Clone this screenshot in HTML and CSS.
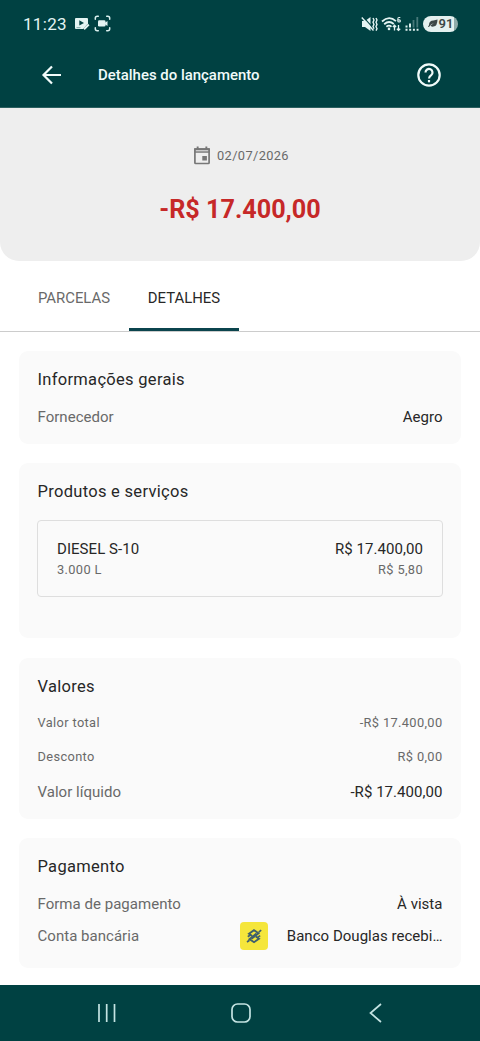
FILE: index.html
```html
<!DOCTYPE html>
<html lang="pt-BR">
<head>
<meta charset="utf-8">
<title>Detalhes do lançamento</title>
<link rel="stylesheet" href="styles.css">
</head>
<body>
<div class="screen">
  <div class="status">
    <span class="clock">11:23</span>
    <svg class="media" width="16" height="14" viewBox="0 0 16 14"><path d="M2 1h11q1 0 1 1v4.500L9 12H2q-1 0-1-1V2q0-1 1-1z" fill="#e4f4f3"/><path d="M5.300 3.200v5.400L10 5.900z" fill="#004142"/><path d="M2.500 10.700h4" stroke="#7ba5a5" stroke-width="1"/><path d="M10 12.300l4.800-4.800" stroke="#e4f4f3" stroke-width="2"/></svg>
    <svg width="17" height="17" viewBox="0 0 17 17" fill="none" stroke="#d9efee" stroke-width="1.500" stroke-linecap="round"><path d="M1.300 4.200V3.300q0-2 2-2h1M12.700 1.300h1q2 0 2 2v.9M15.700 12.800v.9q0 2-2 2h-1M4.300 15.700h-1q-2 0-2-2v-.9"/><rect x="4" y="5.200" width="7.500" height="6.400" rx="1.300" fill="#e4f4f3" stroke="none"/><path d="M10.500 8l3-2v5l-3-2z" fill="#e4f4f3" stroke="none"/></svg>
    <div class="signals">
      <svg width="17" height="16" viewBox="0 0 17 16"><path d="M1 5h3l5.500-4v14L4 11H1z" fill="#e4f4f3"/><path d="M1.800.7l11 12" stroke="#004142" stroke-width="1.200"/><path d="M.8 1.500l11.700 13" stroke="#e4f4f3" stroke-width="1.400"/><path d="M12 2l1 2-1 2.200 1 2.200-1 2.100 1 2.300M15 2l1 2-1 2.200 1 2.200-1 2.100 1 2.300-1 1.800" fill="none" stroke="#e4f4f3" stroke-width="1.400"/></svg>
      <svg class="wifi" width="21" height="16" viewBox="0 0 21 16" fill="none" stroke="#e4f4f3" stroke-width="1.800"><path d="M1 5.500Q8 -1 15 5.200M3.200 8.200Q8 4 12.800 8M5.400 10.700Q8 8.500 10.500 10.700"/><circle cx="8" cy="12.900" r="1.300" fill="#e4f4f3" stroke="none"/><path d="M13.500 14.500V9.500M11.800 11l1.700-1.700 1.600 1.700M17.500 9v5.300M15.900 12.700l1.600 1.700 1.700-1.700" stroke-width="1.300"/><path d="M19.300 1.500h-1.300q-1.200 0-1.200 1.500v2q0 1 1.300 1t1.300-1-1.300-1.100h-1.200" stroke-width="1.100"/></svg>
      <svg width="14" height="16" viewBox="0 0 14 16"><path d="M1.500 9.500v2M5 7.500v4" stroke="#d9efee" stroke-width="2"/><path d="M8.500 4v7.500M12.300 1v10.500" stroke="#47797a" stroke-width="1.800"/><path d="M.5 13.700h13" stroke="#e4f4f3" stroke-width="2" stroke-dasharray="2 1.700"/></svg>
      <div class="battery"><svg width="10" height="9" viewBox="0 0 10 9"><path d="M1 6Q1 1.500 5.500 1.500L9.500.5Q9.500 7 5.500 7.500 3 8 2.500 6.500L6 4Q2.500 5 1 8H0z" fill="#3c4746"/></svg><b>91</b></div>
    </div>
  </div>
  <header class="appbar">
    <svg class="back" width="22" height="20" viewBox="0 0 22 20" fill="none" stroke="#f1fbfa" stroke-width="2.200"><path d="M20 10H3M11 1.500L2.500 10l8.500 8.500"/></svg>
    <h1>Detalhes do lançamento</h1>
    <svg class="help" width="26" height="26" viewBox="0 0 26 26" fill="none" stroke="#f1fbfa" stroke-width="2.200"><circle cx="13" cy="13" r="10.700"/><path d="M9.500 10.500a3.500 3.500 0 1 1 5.700 2.700Q13 14.800 13 16.500"/><path d="M13 18v2.300"/></svg>
  </header>
  <section class="summary">
    <div class="date"><svg width="18" height="19" viewBox="0 0 18 19"><path d="M1.900 3h14.200v13.700q0 .8-.8.800H2.700q-.8 0-.8-.8z" fill="none" stroke="#777" stroke-width="1.700"/><path d="M1.500 2.300h15V6.800h-15zM3.700.5h1.900V3H3.700zM12.400.5h1.900V3h-1.900zM9.300 10h4.600v4.600H9.300z" fill="#777"/><path d="M2.800 4.300h12.400v1H2.800z" fill="#eee"/></svg><span>02/07/2026</span></div>
    <div class="amount">-R$ 17.400,00</div>
  </section>
  <nav class="tabs"><span class="tab">PARCELAS</span><span class="tab active">DETALHES</span></nav>
  <main class="cards">
    <section class="card general">
      <h2>Informações gerais</h2>
      <div class="row"><span>Fornecedor</span><span class="value">Aegro</span></div>
    </section>
    <section class="card products">
      <h2>Produtos e serviços</h2>
      <div class="product">
        <div class="row line"><span class="name">DIESEL S-10</span><span class="price">R$ 17.400,00</span></div>
        <div class="row small"><span>3.000 L</span><span>R$ 5,80</span></div>
      </div>
    </section>
    <section class="card values">
      <h2>Valores</h2>
      <div class="row small"><span>Valor total</span><span>-R$ 17.400,00</span></div>
      <div class="row small discount"><span>Desconto</span><span>R$ 0,00</span></div>
      <div class="row net"><span>Valor líquido</span><span class="price">-R$ 17.400,00</span></div>
    </section>
    <section class="card payment">
      <h2>Pagamento</h2>
      <div class="row"><span>Forma de pagamento</span><span class="value">À vista</span></div>
      <div class="row account"><span>Conta bancária</span>
        <div class="bank">
          <svg width="28" height="28" viewBox="0 0 28 28"><rect width="28" height="28" rx="4" fill="#f5e63b"/><g fill="none" stroke="#40606c" stroke-width="1.900"><path d="M12.200 14L9 11.700l5-3.500 4.500 3.100-7 5.500"/><path d="M15.800 14.400l3.200 2.300-5 3.500-4.500-3.100 7-5.500"/><path d="M7 20l2.500-1.800M18.800 10.100l2.400-1.900M7.800 14.800l2.800-2M17.400 15.600l2.800-2" stroke-width="1.700"/></g></svg>
          <span class="value">Banco Douglas recebi…</span>
        </div>
      </div>
    </section>
  </main>
  <footer class="navbar">
    <svg width="20" height="20" viewBox="0 0 20 20" stroke="#c4e3e2" stroke-width="1.700"><path d="M2 1v18M9.700 1v18M17.500 1v18"/></svg>
    <svg width="20" height="20" viewBox="0 0 20 20" fill="none" stroke="#c4e3e2" stroke-width="1.700"><rect x="1" y="1" width="18" height="18" rx="5.500"/></svg>
    <svg width="20" height="20" viewBox="0 0 20 20" fill="none" stroke="#c4e3e2" stroke-width="1.700"><path d="M16 1L5.500 10 16 19"/></svg>
  </footer>
</div>
</body>
</html>
```
FILE: styles.css
```css
* { box-sizing: border-box; }
body { margin: 0; background: #fff; font-family: Roboto, sans-serif; color: #272727; }
h1, h2 { margin: 0; font-weight: 400; }
svg { display: block; flex: none; }
.screen { width: 480px; height: 1041px; display: flex; flex-direction: column; overflow: hidden; }
.status { height: 47px; background: #004142; display: flex; align-items: center; padding: 0 22px 0 23px; color: #e4f4f3; }
.clock { font-size: 17px; letter-spacing: .3px; width: 51px; white-space: nowrap; }
.media { margin-right: 4px; }
.signals { margin-left: auto; display: flex; align-items: center; gap: 3px; }
.battery { width: 35px; height: 16px; border-radius: 8px; background: linear-gradient(90deg, #e4f0ef 90%, #8fabaa 90%); color: #3c4746; display: flex; align-items: center; justify-content: center; gap: 1px; font-size: 13px; margin-left: 1px; }
.battery b { font-weight: 600; }
.appbar { height: 61px; background: #004142; border-bottom: 1px solid #2c6060; display: flex; align-items: center; padding: 0 38px 5px 41px; color: #f1fbfa; }
.appbar h1 { font-size: 14.950px; font-weight: 500; margin-left: 35px; white-space: nowrap; }
.help { margin-left: auto; }
.summary { height: 153px; background: #eee; border-radius: 0 0 19px 19px; display: flex; flex-direction: column; align-items: center; padding-top: 38px; }
.date { display: flex; align-items: center; gap: 6px; height: 19px; padding-left: 2px; font-size: 12.800px; letter-spacing: .38px; color: #696969; }
.amount { margin-top: 29px; font-size: 25.200px; line-height: 32px; font-weight: 700; color: #c62828; white-space: nowrap; }
.tabs { height: 71px; border-bottom: 1px solid #ccc; padding-left: 19px; display: flex; }
.tab { width: 110px; height: 70px; padding-top: 28px; font-size: 14.900px; line-height: 18px; text-align: center; color: #696969; border-bottom: 3px solid transparent; }
.tab.active { color: #272727; border-color: #0b444d; }
.cards { flex: 1; padding: 19px 19px 0; display: flex; flex-direction: column; }
.card { background: #fafafa; border-radius: 9px; padding: 19px 18.500px 0; }
.card h2 { font-size: 16.500px; line-height: 20px; letter-spacing: .3px; }
.general { height: 93px; }
.products { height: 175px; margin-top: 19px; }
.values { height: 161px; margin-top: 20px; }
.payment { height: 130px; margin-top: 19px; }
.row { display: flex; justify-content: space-between; align-items: center; height: 20px; font-size: 15px; letter-spacing: .03px; color: #696969; white-space: nowrap; }
.row .value, .row .price, .row .name { color: #272727; }
.row .price, .row .name { letter-spacing: .05px; }
.row.small { font-size: 12.800px; letter-spacing: .37px; }
h2 + .row { margin-top: 17px; }
.product { height: 77px; margin: 18px 0 0 -.5px; border: 1px solid #dedede; border-radius: 4px; padding: 18px 18.500px 0 19px; }
.values h2 + .row { margin-top: 15px; }
.discount { margin-top: 14px; }
.net { margin-top: 16px; }
.row.account { margin-top: 8px; height: 28px; }
.bank { display: flex; align-items: center; gap: 19px; }
.navbar { height: 56px; background: #004142; display: flex; align-items: center; justify-content: space-between; padding: 0 95px 1px 97px; }
```
